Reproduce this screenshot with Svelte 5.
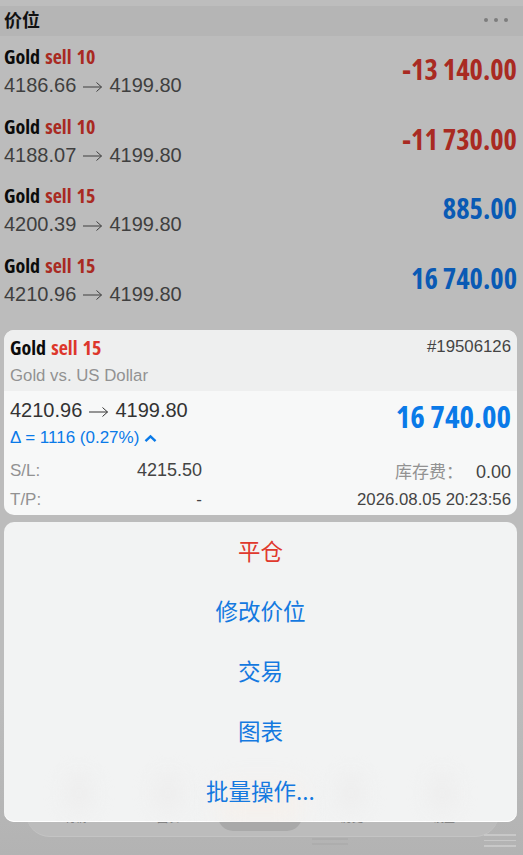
<script>
  const rows = [
    { lots: 10, from: "4186.66", profit: "-13 140.00", loss: true },
    { lots: 10, from: "4188.07", profit: "-11 730.00", loss: true },
    { lots: 15, from: "4200.39", profit: "885.00", loss: false },
    { lots: 15, from: "4210.96", profit: "16 740.00", loss: false }
  ];
  const actions = ["平仓", "修改价位", "交易", "图表", "批量操作..."];
  const tabs = ["行情", "图表", "交易", "历史", "设置"];
  const blobs = [78, 167, 350, 441];
</script>

{#snippet arrow()}
  <svg class="arrow" width="20" height="12" viewBox="0 0 20 12"><path d="M0 6h18.5M13.5 1.5 18.5 6l-5 4.5" fill="none" stroke="currentColor" stroke-width="1"/></svg>
{/snippet}

<div class="page">
  <div class="top"></div>
  <header>
    <span class="title">价位</span>
    <span class="dots"><i></i><i></i><i></i></span>
  </header>

  <div class="list">
    {#each rows as row}
      <div class="row">
        <div>
          <div class="name">Gold <span class="sell">sell {row.lots}</span></div>
          <div class="price">{row.from} {@render arrow()} 4199.80</div>
        </div>
        <div class="profit" class:loss={row.loss}>{row.profit}</div>
      </div>
    {/each}
  </div>

  <section class="card">
    <div class="card-head">
      <div>
        <div class="name big">Gold <span class="sell">sell 15</span></div>
        <div class="desc">Gold vs. US Dollar</div>
      </div>
      <div class="ticket">#19506126</div>
    </div>
    <div class="card-body">
      <div class="main">
        <div>
          <div class="price dark">4210.96 {@render arrow()} 4199.80</div>
          <div class="delta">
            Δ = 1116 (0.27%)
            <svg width="13" height="9" viewBox="0 0 13 9"><path d="M1.5 7.2 6.5 2.4l5 4.8" fill="none" stroke="#0a7ae8" stroke-width="2.4"/></svg>
          </div>
        </div>
        <div class="total">16 740.00</div>
      </div>
      <div class="facts">
        <span class="label">S/L:</span><span class="val left">4215.50</span>
        <span class="right"><span class="label cjk">库存费：</span><span class="val swap">0.00</span></span>
        <span class="label">T/P:</span><span class="val dash">-</span>
        <span class="right val date">2026.08.05 20:23:56</span>
      </div>
    </div>
  </section>

  <div class="tabbar">
    <div class="tabs">
      {#each tabs as tab}
        <span>{tab}</span>
      {/each}
    </div>
    <div class="bump"></div>
  </div>
  <div class="smear"><i></i><i></i></div>
  <div class="handle"><i></i><i></i><i></i></div>

  <nav class="sheet">
    {#each blobs as x}
      <div class="blob" style="left: {x - 18}px"></div>
    {/each}
    <div class="glow"></div>
    {#each actions as action, i}
      <div class="action" class:danger={i === 0}>{action}</div>
    {/each}
  </nav>
</div>

<style>
  :global(body) {
    margin: 0;
    background: #bbbbbb;
  }

  .page {
    position: relative;
    width: 523px;
    height: 855px;
    overflow: hidden;
    background: linear-gradient(#bcbcbc 700px, #b3b3b3);
    font-family: "Liberation Sans", "Noto Sans CJK SC", sans-serif;
  }

  .top {
    height: 6px;
    background: #bdbdbd;
  }

  header {
    height: 30px;
    background: #b5b5b5;
    display: flex;
    align-items: center;
    justify-content: space-between;
    padding: 0 15px 0 4px;
  }

  .title {
    font-size: 18px;
    font-weight: 700;
    color: #111;
    font-family: "Noto Sans CJK SC", sans-serif;
    line-height: 26px;
    margin-top: -4px;
  }

  .dots {
    display: flex;
    gap: 5.8px;
    margin-top: -3px;
  }

  .dots i {
    width: 4px;
    height: 4px;
    border-radius: 50%;
    background: #7d7d7d;
  }

  .list {
    padding-top: 4px;
  }

  .row {
    height: 69.6px;
    padding: 4px 6px 0 4px;
    box-sizing: border-box;
    display: flex;
    justify-content: space-between;
    align-items: flex-start;
  }

  .name {
    font-family: "Open Sans", sans-serif;
    font-stretch: 75%;
    font-weight: 700;
    font-size: 20px;
    word-spacing: 1.5px;
    line-height: 26px;
    color: #0b0b0b;
  }

  .sell {
    color: #a92a22;
  }

  .price {
    font-size: 20px;
    line-height: 29px;
    margin-top: 1px;
    color: #3f3f3f;
  }

  .arrow {
    margin: 0 1px;
    vertical-align: -0.5px;
  }

  .profit {
    font-family: "Open Sans", sans-serif;
    font-stretch: 75%;
    font-weight: 700;
    font-size: 28.5px;
    line-height: 34px;
    margin-top: 8px;
    color: #0a5ab4;
  }

  .profit.loss {
    color: #a92a22;
  }

  .card {
    margin: 12px 6px 0 4px;
    border-radius: 10px;
    overflow: hidden;
    background: #f7f8f8;
  }

  .card-head {
    height: 61px;
    box-sizing: border-box;
    background: #eeefef;
    padding: 5px 6px 0 6px;
    display: flex;
    justify-content: space-between;
    align-items: flex-start;
  }

  .big .sell {
    color: #dd372c;
  }

  .desc {
    font-size: 16.8px;
    line-height: 25px;
    margin-top: 2px;
    color: #929292;
  }

  .ticket {
    font-size: 16.8px;
    line-height: 24px;
    color: #444;
  }

  .card-body {
    height: 124px;
    box-sizing: border-box;
    padding: 5px 6px 0 6px;
  }

  .main {
    display: flex;
    justify-content: space-between;
    align-items: flex-start;
  }

  .dark {
    line-height: 28px;
    margin-top: 0;
    color: #333;
  }

  .delta {
    font-size: 17px;
    line-height: 26px;
    margin-top: 1px;
    color: #0a7ae8;
    display: flex;
    align-items: center;
    gap: 5px;
  }

  .total {
    font-family: "Open Sans", sans-serif;
    font-stretch: 75%;
    font-weight: 700;
    font-size: 31px;
    line-height: 40px;
    color: #0a7ae8;
  }

  .facts {
    display: grid;
    grid-template-columns: 60px 132px 1fr;
    font-size: 17px;
    line-height: 27px;
    margin-top: 6px;
  }

  .label {
    color: #929292;
  }

  .val {
    color: #444;
  }

  .left {
    text-align: right;
    font-size: 18px;
  }

  .dash {
    text-align: right;
  }

  .right {
    text-align: right;
  }

  .date {
    font-size: 16.8px;
  }

  .swap {
    margin-left: 13px;
    font-size: 18px;
  }

  .cjk {
    font-family: "Noto Sans CJK SC", sans-serif;
  }

  .tabbar {
    position: absolute;
    left: 26px;
    right: 24px;
    top: 700px;
    height: 136px;
    border-radius: 0 0 24px 24px;
    background: #bcbcbc;
    border-bottom: 1px solid #c4c4c4;
  }

  .tabs {
    position: absolute;
    top: 111px;
    left: 39px;
    right: 44px;
    display: flex;
    justify-content: space-between;
    font-size: 11px;
    line-height: 14px;
    color: #777;
  }

  .tabs span {
    width: 22px;
  }

  .bump {
    position: absolute;
    left: 192px;
    top: 116px;
    width: 84px;
    height: 15px;
    border-radius: 0 0 30px 30px;
    background: #a9a9a9;
  }

  .smear {
    position: absolute;
    left: 312px;
    top: 838px;
    width: 36px;
    display: grid;
    gap: 3px;
  }

  .smear i {
    height: 2px;
    background: #adadad;
  }

  .handle {
    position: absolute;
    left: 484px;
    top: 834px;
    width: 32px;
    display: grid;
    gap: 4px;
  }

  .handle i {
    height: 1.5px;
    background: #c8c8c8;
  }

  .sheet {
    position: absolute;
    left: 4px;
    right: 6px;
    top: 522px;
    height: 300px;
    overflow: hidden;
    border-radius: 10px;
    box-shadow: inset 0 -1px 0 #fff;
    background: #f2f3f3;
    display: flex;
    flex-direction: column;
  }

  .blob {
    position: absolute;
    top: 250px;
    width: 30px;
    height: 42px;
    border-radius: 50%;
    background: #eeeeee;
    filter: blur(9px);
  }

  .glow {
    position: absolute;
    left: 216px;
    top: 262px;
    width: 80px;
    height: 38px;
    background: #f5f0ec;
    filter: blur(12px);
  }

  .action {
    position: relative;
    flex: 1;
    display: flex;
    align-items: center;
    justify-content: center;
    padding-bottom: 4px;
    font-family: "Noto Sans CJK SC", sans-serif;
    font-size: 22.5px;
    color: #1479e0;
  }

  .danger {
    color: #e0392d;
  }
</style>
